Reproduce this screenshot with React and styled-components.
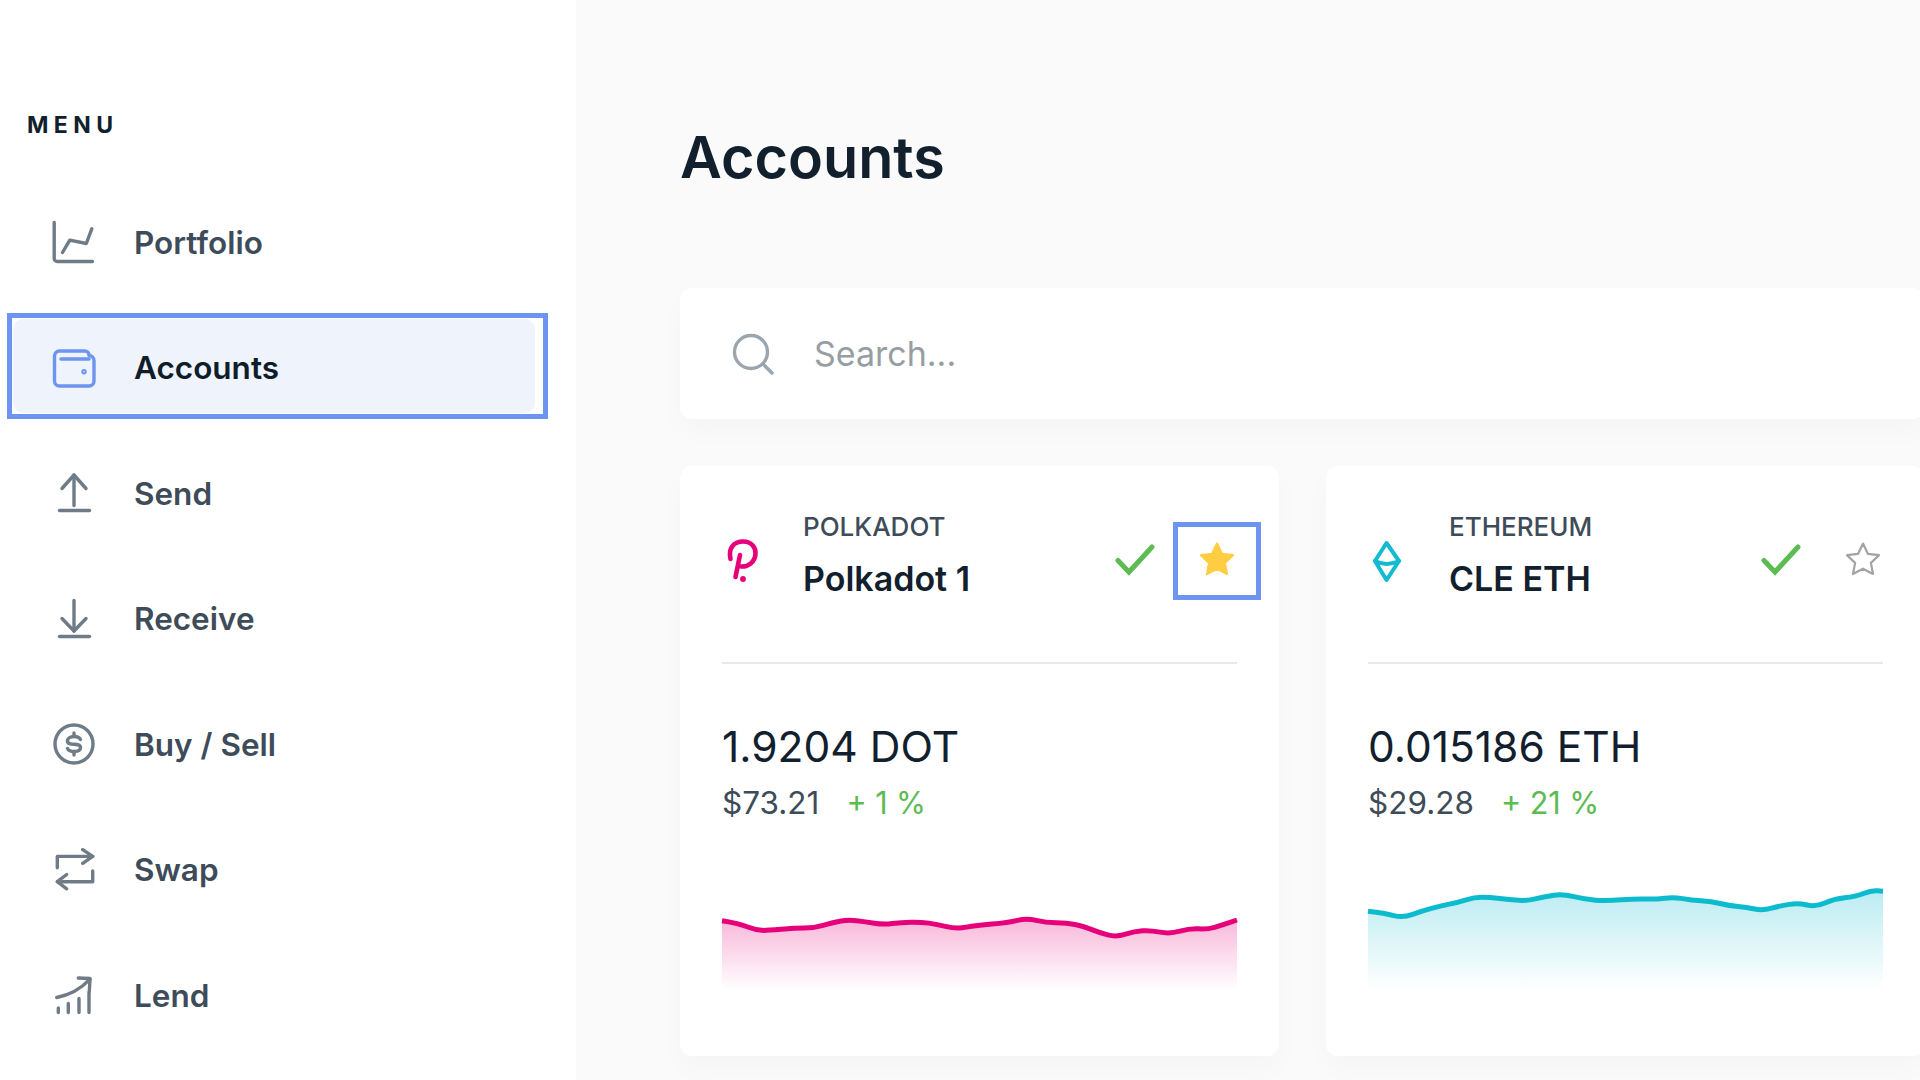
import React from "react";
import styled, { createGlobalStyle } from "styled-components";

const pinkLine = [[0,40.7],[17,43.3],[34.8,50.7],[52.6,50],[72.4,48],[92.1,48],[110,42.7],[125.7,39.7],[143.5,41.7],[161.3,44.7],[179.1,42.3],[198.9,42],[214.7,44.3],[234.5,49],[254.2,45.3],[285.9,42.7],[304.9,38],[323.5,42.7],[345.2,43],[361,46],[378.8,53.3],[394.6,57],[412.4,51.3],[428.2,50.3],[448,54],[467.8,48.3],[485.6,49.3],[499.4,45.3],[515,40]];
const tealLine = [[0,31.3],[17,33.3],[34.8,38],[54.6,30.7],[72.4,26],[90.2,22.3],[106,17.3],[121.8,17.3],[141.6,19.7],[159.4,21],[177.2,16.3],[195,14],[216.8,19.3],[238.4,21],[268,18.7],[287.8,19.3],[305.6,17],[323.4,20.3],[343.2,21.3],[361,25.7],[378.8,27.3],[394.6,30.7],[412.4,25.7],[430.2,23],[448,27],[465.8,19],[487.5,16.7],[503.4,10.3],[515,11.3]];

// smooth the sampled points through their midpoints
function smoothPath(points) {
  let d = `M${points[0][0]} ${points[0][1]}`;
  for (let i = 1; i < points.length - 1; i++) {
    const mx = (points[i][0] + points[i + 1][0]) / 2;
    const my = (points[i][1] + points[i + 1][1]) / 2;
    d += ` Q${points[i][0]} ${points[i][1]} ${mx} ${my}`;
  }
  const last = points[points.length - 1];
  return d + ` L${last[0]} ${last[1]}`;
}

const GlobalStyle = createGlobalStyle`
  html, body {
    margin: 0;
    padding: 0;
    height: 100%;
    overflow: hidden;
    background: #fafafa;
    font-family: Inter, "Noto Sans", sans-serif;
  }
  * { box-sizing: border-box; }
`;

const Page = styled.div`
  display: flex;
  width: 1920px;
  height: 1080px;
  overflow: hidden;
`;

const Sidebar = styled.aside`
  flex: 0 0 576px;
  background: #fff;
  padding-top: 113px;
`;

const MenuLabel = styled.div`
  margin-left: 27px;
  font-size: 23px;
  line-height: 24px;
  font-weight: 700;
  letter-spacing: 5.4px;
  color: #12202e;
`;

const NavList = styled.nav`
  display: flex;
  flex-direction: column;
  gap: 19.5px;
  margin: 50.5px 0 0 7px;
  width: 541px;
`;

const NavRow = styled.a`
  display: flex;
  height: 106px;
  padding: 1px 8px 1px 1px;
  border: 5px solid ${(p) => (p.$active ? "#6d94ef" : "transparent")};
`;

const NavInner = styled.span`
  display: flex;
  flex: 1;
  align-items: center;
  gap: 38px;
  padding: 3px 0 0 39px;
  border-radius: 10px;
  font-size: 31.5px;
  font-weight: 600;
  color: ${(p) => (p.$active ? "#0f1d2b" : "#3e4c59")};
  background: ${(p) => (p.$active ? "#eff3fc" : "transparent")};
`;

const IconSvg = styled.svg`
  width: 44px;
  height: 44px;
  flex: none;
  fill: none;
  stroke: ${(p) => (p.$active ? "#6d94ef" : "#6f7c87")};
  stroke-width: 3.4;
  stroke-linecap: round;
  stroke-linejoin: round;
`;

const Main = styled.main`
  flex: 1;
  min-width: 0;
  padding: 122px 0 0 104px;
  background: #fafafa;
`;

const Title = styled.h1`
  margin: 0;
  font-size: 57.5px;
  line-height: 70px;
  font-weight: 600;
  color: #12202e;
`;

const Panel = styled.div`
  background: #fff;
  border-radius: 12px;
  box-shadow: 0 12px 28px rgba(0, 0, 0, 0.025);
`;

const SearchBar = styled(Panel)`
  display: flex;
  align-items: center;
  gap: 40px;
  width: 1245px;
  height: 131px;
  margin-top: 96px;
  padding-left: 52px;
`;

const SearchIcon = styled.svg`
  width: 42px;
  height: 42px;
  flex: none;
  fill: none;
  stroke: #9aa5ad;
  stroke-width: 3.4;
  stroke-linecap: round;
`;

const SearchInput = styled.input`
  flex: 1;
  border: 0;
  outline: 0;
  padding: 0;
  background: transparent;
  font: 400 34px Inter, sans-serif;
  color: #12202e;
  &::placeholder {
    color: #979ea3;
    opacity: 1;
  }
`;

const CardRow = styled.div`
  display: flex;
  gap: 47px;
  margin-top: 47px;
`;

const Card = styled(Panel)`
  flex: 0 0 599px;
  height: 590px;
`;

const CardHead = styled.div`
  display: flex;
  align-items: center;
  height: 196px;
  margin-left: 42px;
  padding-right: 18px;
`;

const LogoBox = styled.div`
  display: flex;
  flex: 0 0 81px;
  margin-top: -9px;
`;

const CoinLogo = styled.svg`
  width: 40px;
  height: 48px;
  fill: none;
  stroke: ${(p) => p.$color};
  stroke-linecap: round;
  stroke-linejoin: round;
`;

const NameBlock = styled.div`
  flex: 1;
  min-width: 0;
  margin-bottom: 18px;
`;

const Network = styled.div`
  font-size: 26px;
  line-height: 32px;
  font-weight: 500;
  color: #3e4c59;
`;

const AccountName = styled.div`
  margin-top: 16px;
  font-size: 34px;
  line-height: 40px;
  font-weight: 600;
  color: #12202e;
`;

const CheckIcon = styled.svg`
  width: 40px;
  height: 32px;
  flex: none;
  margin: -9px 18px 0 0;
  fill: none;
  stroke: #5cbb52;
  stroke-width: 5;
  stroke-linecap: round;
  stroke-linejoin: miter;
`;

const StarButton = styled.button`
  display: flex;
  align-items: center;
  justify-content: center;
  flex: none;
  width: 88px;
  height: 78px;
  margin-top: -7px;
  padding: 0;
  background: none;
  border: 5px solid ${(p) => (p.$focused ? "#6d94ef" : "transparent")};
`;

const StarIcon = styled.svg`
  width: 40px;
  height: 40px;
  margin: -1px 1px 0 0;
  fill: ${(p) => (p.$filled ? "#ffcd41" : "none")};
  stroke: ${(p) => (p.$filled ? "#ffcd41" : "#a3a3a3")};
  stroke-width: 2;
  stroke-linejoin: round;
`;

const Divider = styled.hr`
  height: 2px;
  margin: 0 42px;
  border: 0;
  background: #e8e9ea;
`;

const Balance = styled.div`
  margin: 58px 42px 0;
  font-size: 42.5px;
  line-height: 50px;
  font-weight: 400;
  color: #12202e;
`;

const FiatRow = styled.div`
  display: flex;
  align-items: baseline;
  gap: 27px;
  margin: 11px 42px 0;
  font-size: 31.5px;
  line-height: 40px;
  color: #3e4c59;
`;

const Change = styled.span`
  font-size: 30.5px;
  color: #5cbb52;
`;

const Chart = styled.svg`
  display: block;
  width: 515px;
  height: 110px;
  margin: 57px 0 0 42px;
  overflow: visible;
`;

const navItems = [
  {
    label: "Portfolio",
    icon: (
      <>
        <path d="M2.2 2.5V38.5a3 3 0 0 0 3 3H40.5" />
        <path d="M10.5 32.5L17.8 20.2L34.3 23.5L39.8 8.8" />
      </>
    ),
  },
  {
    label: "Accounts",
    active: true,
    icon: (
      <>
        <path d="M2.5 35V10a5 5 0 0 1 5-5H33a4 4 0 0 1 4 4V9.5a5 5 0 0 1 5 5V35a5 5 0 0 1-5 5H7.5a5 5 0 0 1-5-5Z" />
        <path d="M9 13H37" />
        <circle cx="32" cy="25.7" r="1" />
      </>
    ),
  },
  {
    label: "Send",
    icon: (
      <>
        <path d="M22 4V34.5" />
        <path d="M10 17.5L22 4L34 17.5" />
        <path d="M7.5 39.5H37.5" />
      </>
    ),
  },
  {
    label: "Receive",
    icon: (
      <>
        <path d="M22 3.5V34" />
        <path d="M10 21.5L22 34L34 21.5" />
        <path d="M7.5 39.5H37.5" />
      </>
    ),
  },
  {
    label: "Buy / Sell",
    icon: (
      <>
        <circle cx="22" cy="22" r="19" />
        <path d="M28.5 17.5C27.5 15.5 25 14.5 22 14.5C18 14.5 15.5 16.5 15.5 19C15.5 25 28.5 19.5 28.5 25.5C28.5 28 26 29.5 22 29.5C19 29.5 16.5 28.5 15.5 26.5" />
        <path d="M22 11V14.5M22 29.5V33" />
      </>
    ),
  },
  {
    label: "Swap",
    icon: (
      <>
        <path d="M5.3 19.7V8.4H40.7" />
        <path d="M30.7 1.6L40.7 8.4L30.7 15.4" />
        <path d="M40.7 23V33.7H5.3" />
        <path d="M14.7 26.5L5.3 33.7L14.7 40.8" />
      </>
    ),
  },
  {
    label: "Lend",
    icon: (
      <>
        <path d="M4.7 24.5Q24 21 38 6.2" />
        <path d="M26.3 5L38 5.5L37.3 18.5" />
        <path d="M6.3 39.5V35M16.3 39.5V30.5M27 39.5V25.5M37 39.5V19.5" />
      </>
    ),
  },
];

const STAR = "M18 3.2L22.4 12.4L32.4 13.7L25.1 20.6L27 30.6L18 25.8L9 30.6L10.9 20.6L3.6 13.7L13.6 12.4Z";

const PolkadotLogo = () => (
  <CoinLogo $color="#e6007a" viewBox="0 0 40 48">
    <path strokeWidth="4.6" d="M8.5 23C6 12 12 5.5 21 5.5C30 5.5 34 12 33.5 18C33 26 26 31 19 30.5" />
    <path strokeWidth="4.6" d="M18 19L13.5 41" />
    <circle cx="21" cy="43" r="1.4" strokeWidth="3" />
  </CoinLogo>
);

const EthereumLogo = () => (
  <CoinLogo $color="#12bbd0" viewBox="0 0 40 48">
    <path strokeWidth="4" d="M18.5 7L7 25L18.5 44L31 25Z" />
    <path strokeWidth="4" d="M7 25Q18.5 31 31 25" />
  </CoinLogo>
);

const accounts = [
  {
    id: "dot",
    network: "POLKADOT",
    name: "Polkadot 1",
    balance: "1.9204 DOT",
    fiat: "$73.21",
    change: "+ 1 %",
    color: "#e6007a",
    logo: <PolkadotLogo />,
    line: pinkLine,
    favourite: true,
  },
  {
    id: "eth",
    network: "ETHEREUM",
    name: "CLE ETH",
    balance: "0.015186 ETH",
    fiat: "$29.28",
    change: "+ 21 %",
    color: "#0dbbcf",
    logo: <EthereumLogo />,
    line: tealLine,
    favourite: false,
  },
];

function AccountCard({ account }) {
  const line = smoothPath(account.line);
  return (
    <Card>
      <CardHead>
        <LogoBox>{account.logo}</LogoBox>
        <NameBlock>
          <Network>{account.network}</Network>
          <AccountName>{account.name}</AccountName>
        </NameBlock>
        <CheckIcon viewBox="0 0 40 32">
          <path d="M3 16.5L14 28L37 3" />
        </CheckIcon>
        <StarButton $focused={account.favourite}>
          <StarIcon $filled={account.favourite} viewBox="0 0 36 36">
            <path d={STAR} />
          </StarIcon>
        </StarButton>
      </CardHead>
      <Divider />
      <Balance>{account.balance}</Balance>
      <FiatRow>
        <span>{account.fiat}</span>
        <Change>{account.change}</Change>
      </FiatRow>
      <Chart viewBox="0 0 515 110">
        <defs>
          <linearGradient id={`fade-${account.id}`} x1="0" y1="0" x2="0" y2="1">
            <stop offset="0" stopColor={account.color} stopOpacity="0.28" />
            <stop offset="1" stopColor={account.color} stopOpacity="0" />
          </linearGradient>
        </defs>
        <path d={`${line} V110 H0 Z`} fill={`url(#fade-${account.id})`} />
        <path d={line} fill="none" stroke={account.color} strokeWidth="5" />
      </Chart>
    </Card>
  );
}

export default function App() {
  return (
    <Page>
      <GlobalStyle />
      <Sidebar>
        <MenuLabel>MENU</MenuLabel>
        <NavList>
          {navItems.map((item) => (
            <NavRow key={item.label} $active={item.active}>
              <NavInner $active={item.active}>
                <IconSvg $active={item.active} viewBox="0 0 44 44">
                  {item.icon}
                </IconSvg>
                {item.label}
              </NavInner>
            </NavRow>
          ))}
        </NavList>
      </Sidebar>
      <Main>
        <Title>Accounts</Title>
        <SearchBar>
          <SearchIcon viewBox="0 0 42 42">
            <circle cx="19" cy="19" r="16.5" />
            <path d="M31 31L40 40" />
          </SearchIcon>
          <SearchInput placeholder="Search..." />
        </SearchBar>
        <CardRow>
          {accounts.map((account) => (
            <AccountCard key={account.id} account={account} />
          ))}
        </CardRow>
      </Main>
    </Page>
  );
}
